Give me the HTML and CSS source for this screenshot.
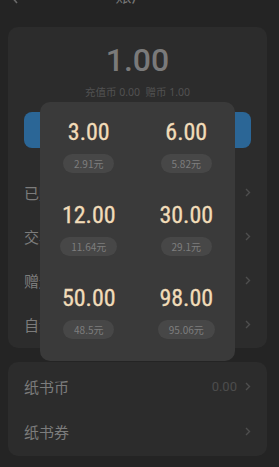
FILE: index.html
```html
<!DOCTYPE html>
<html lang="zh">
<head>
<meta charset="utf-8">
<title>账户</title>
<link rel="stylesheet" href="styles.css">
</head>
<body>
<div class="page">
  <div class="header">
    <svg class="back" width="10" height="16" viewBox="0 0 10 16"><polyline points="8,1 2,8 8,15" fill="none" stroke="#6a6a6a" stroke-width="1.6"/></svg>
    <div class="title">账户</div>
  </div>

  <div class="card balance">
    <div class="amount">1.00</div>
    <div class="sub">充值币 0.00&nbsp;&nbsp;赠币 1.00</div>
    <div class="btn"></div>
    <div class="row"><span class="label">已购</span><span class="right"><svg class="chev" width="6" height="9" viewBox="0 0 6 9"><polyline points="1,1 4.5,4.5 1,8" fill="none" stroke="#4e4e4e" stroke-width="1.4"/></svg></span></div>
    <div class="row"><span class="label">交易</span><span class="right"><svg class="chev" width="6" height="9" viewBox="0 0 6 9"><polyline points="1,1 4.5,4.5 1,8" fill="none" stroke="#4e4e4e" stroke-width="1.4"/></svg></span></div>
    <div class="row"><span class="label">赠送</span><span class="right"><svg class="chev" width="6" height="9" viewBox="0 0 6 9"><polyline points="1,1 4.5,4.5 1,8" fill="none" stroke="#4e4e4e" stroke-width="1.4"/></svg></span></div>
    <div class="row"><span class="label">自动</span><span class="right"><svg class="chev" width="6" height="9" viewBox="0 0 6 9"><polyline points="1,1 4.5,4.5 1,8" fill="none" stroke="#4e4e4e" stroke-width="1.4"/></svg></span></div>
  </div>

  <div class="card paper">
    <div class="row row2"><span class="label">纸书币</span><span class="right"><span class="val">0.00</span><svg class="chev" width="6" height="9" viewBox="0 0 6 9"><polyline points="1,1 4.5,4.5 1,8" fill="none" stroke="#4e4e4e" stroke-width="1.4"/></svg></span></div>
    <div class="row row2"><span class="label">纸书券</span><span class="right"><svg class="chev" width="6" height="9" viewBox="0 0 6 9"><polyline points="1,1 4.5,4.5 1,8" fill="none" stroke="#4e4e4e" stroke-width="1.4"/></svg></span></div>
  </div>

  <div class="popup">
    <div class="opt"><div class="num">3.00</div><div class="pill">2.91元</div></div>
    <div class="opt"><div class="num">6.00</div><div class="pill">5.82元</div></div>
    <div class="opt"><div class="num">12.00</div><div class="pill">11.64元</div></div>
    <div class="opt"><div class="num">30.00</div><div class="pill">29.1元</div></div>
    <div class="opt"><div class="num">50.00</div><div class="pill">48.5元</div></div>
    <div class="opt"><div class="num">98.00</div><div class="pill">95.06元</div></div>
  </div>
</div>
</body>
</html>
```

FILE: styles.css
```css
* { box-sizing: border-box; }
html, body { margin: 0; padding: 0; }
body {
  background: #242424;
  font-family: "Noto Sans", "Noto Sans CJK SC", sans-serif;
  width: 279px;
  height: 467px;
  overflow: hidden;
}
.page { position: relative; height: 467px; }
.header {
  height: 27px;
  position: relative;
  overflow: hidden;
}
.back { position: absolute; left: 9px; top: -12px; }
.title {
  margin-top: -15px;
  line-height: 20px;
  font-size: 16px;
  color: #777;
  text-align: center;
  padding-right: 16px;
  font-family: "Noto Sans CJK SC", sans-serif;
}
.card {
  margin: 0 12px 0 8px;
  background: #2c2c2c;
  border-radius: 10px;
}
.balance {
  padding: 14px 0 2px;
  display: flex;
  flex-direction: column;
}
.amount {
  font-family: Roboto, sans-serif;
  font-weight: 500;
  font-size: 32px;
  line-height: 38px;
  color: #7a7a7a;
  text-align: center;
}
.sub {
  margin-top: 5px;
  font-size: 10.5px;
  line-height: 16px;
  color: #525252;
  text-align: center;
  font-family: "Noto Sans", "Noto Sans CJK SC", sans-serif;
}
.btn {
  margin: 12px 16px 22px;
  height: 36px;
  border-radius: 8px;
  background: #2b6696;
}
.row {
  height: 44px;
  display: flex;
  align-items: center;
  justify-content: space-between;
  padding: 0 16px;
}
.label {
  font-size: 15px;
  color: #7c7c7c;
  font-family: "Noto Sans CJK SC", sans-serif;
}
.right { display: flex; align-items: center; gap: 8px; }
.val { font-size: 13px; color: #4c4c4c; font-family: Roboto, sans-serif; }
.paper {
  margin-top: 14px;
  padding: 2px 0;
}
.row2 { height: 45px; }
.popup {
  position: absolute;
  left: 40px;
  top: 102px;
  width: 195px;
  height: 259px;
  background: #3a3a3a;
  border-radius: 10px;
  padding-top: 16px;
  display: grid;
  grid-template-columns: 1fr 1fr;
  grid-auto-rows: 55px;
  row-gap: 28px;
  align-content: start;
}
.opt { display: flex; flex-direction: column; align-items: center; }
.num {
  font-family: "Liberation Sans Narrow", "Roboto Condensed", sans-serif;
  font-size: 24px;
  line-height: 28px;
  color: #f1dcb9;
  -webkit-text-stroke: 0.3px #f1dcb9;
}
.pill {
  margin-top: 8px;
  height: 19px;
  line-height: 19px;
  padding: 0 11px;
  border-radius: 10px;
  background: #474747;
  color: #7e7e7e;
  font-size: 10px;
  font-family: "Liberation Sans Narrow", "Noto Sans CJK SC", sans-serif;
}
```
